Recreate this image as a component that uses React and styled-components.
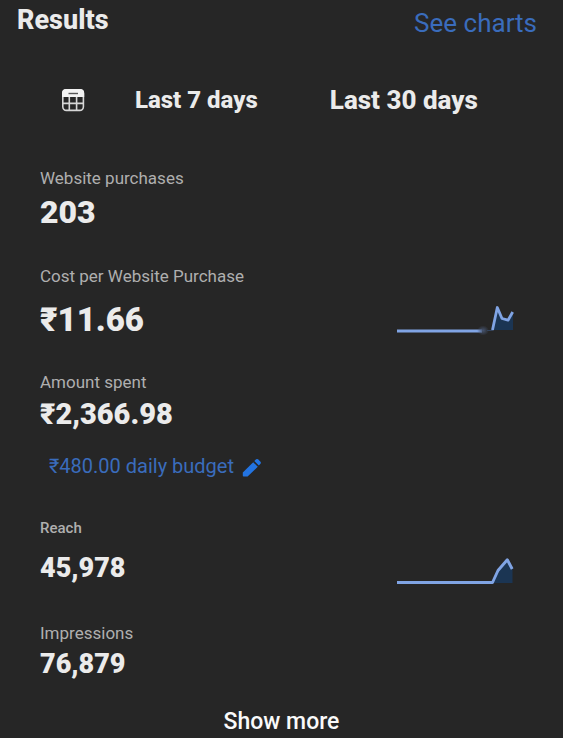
import React, { useState } from 'react';
import styled, { createGlobalStyle } from 'styled-components';

const GlobalStyle = createGlobalStyle`
  *, *::before, *::after { box-sizing: border-box; }
  body {
    margin: 0;
    background: #262626;
    color: #ebebeb;
    font-family: Roboto, "Liberation Sans", sans-serif;
  }
`;

const Panel = styled.main`
  display: flex;
  flex-direction: column;
  padding: 4px 0 2px;
`;

const Header = styled.header`
  display: flex;
  justify-content: space-between;
  align-items: flex-start;
  padding: 0 26px 0 17px;
`;

const Title = styled.h1`
  margin: 0;
  font-size: 27px;
  line-height: 32px;
  font-weight: 800;
`;

const ChartsLink = styled.a`
  margin-top: 3px;
  font-size: 26px;
  line-height: 32px;
  color: #3a6cbc;
  text-decoration: none;
`;

const Ranges = styled.nav`
  display: flex;
  align-items: center;
  margin-top: 45px;
  padding-left: 61px;
`;

const RangeButton = styled.button`
  display: flex;
  align-items: center;
  height: 32px;
  margin: 0 0 0 ${(p) => p.$gap || 0}px;
  padding: 0;
  border: 0;
  background: none;
  color: inherit;
  font: 800 ${(p) => p.$size || 24}px/30px Roboto, "Liberation Sans", sans-serif;
  cursor: pointer;
`;

const Metrics = styled.dl`
  display: flex;
  flex-direction: column;
  margin: 52px 0 0;
  padding: 0 49px 0 40px;
`;

const Metric = styled.div`
  margin-bottom: ${(p) => p.$after}px;
`;

const Label = styled.dt`
  font-size: ${(p) => (p.$small ? 15 : 17)}px;
  line-height: 20px;
  font-weight: ${(p) => (p.$small ? 500 : 400)};
  color: #afafaf;
`;

const Reading = styled.dd`
  display: flex;
  justify-content: space-between;
  align-items: center;
  margin: ${(p) => p.$gap}px 0 0;
  font-size: ${(p) => p.$size}px;
  line-height: ${(p) => p.$line}px;
  font-weight: 900;
`;

const Spark = styled.svg`
  display: block;
  width: 118px;
  height: 32px;
  flex: none;
`;

const Budget = styled.dd`
  margin: 22px 0 0 9px;
`;

const BudgetButton = styled.button`
  display: flex;
  align-items: center;
  gap: 8px;
  padding: 0;
  border: 0;
  background: none;
  color: #3a6cbc;
  font: 400 20px/24px Roboto, "Liberation Sans", sans-serif;
  cursor: pointer;

  svg { margin-top: 3px; }
`;

const MoreButton = styled.button`
  align-self: center;
  padding: 0;
  border: 0;
  background: none;
  color: #fafafa;
  font: 500 23px/28px Roboto, "Liberation Sans", sans-serif;
  cursor: pointer;
`;

function CalendarIcon() {
  return (
    <svg width="24" height="24" viewBox="0 0 24 24" aria-hidden="true">
      <rect x="1.8" y="1.8" width="20.6" height="20.6" rx="3.6" fill="none" stroke="#d6d6d6" strokeWidth="1.6" />
      <path d="M1 9V5a4 4 0 0 1 4-4h14.2a4 4 0 0 1 4 4v4z" fill="#f2f2f2" />
      <path d="M7.5 5.5h9.5" stroke="#555" strokeWidth="1.4" />
      <path d="M2 15.4h20M8.3 9v13M15.6 9v13" stroke="#d6d6d6" strokeWidth="1.6" />
    </svg>
  );
}

function PencilIcon() {
  return (
    <svg width="20" height="20" viewBox="0 0 20 20" aria-hidden="true">
      <path d="M1.6 18.6q-.8 0-.8-.8v-3.2L11.2 4.2l4.6 4.6L5.6 18.6zM12.3 3.1l1.8-1.8q1-.8 2 0l2.4 2.4q.8 1 0 2l-1.7 1.9z" fill="#2374e1" />
    </svg>
  );
}

function CostSpark() {
  return (
    <Spark viewBox="0 0 118 32" role="img" aria-label="Cost per website purchase trend">
      <defs>
        <radialGradient id="joint">
          <stop offset="0" stopColor="#46546f" />
          <stop offset="1" stopColor="#46546f" stopOpacity="0" />
        </radialGradient>
      </defs>
      <path d="M96 26L101 3L105 14L112 16L117 8V26z" fill="#1b3553" />
      <path d="M1 27H86" stroke="#80a4e4" strokeWidth="3" />
      <ellipse cx="87" cy="26.5" rx="6" ry="5" fill="url(#joint)" />
      <path d="M91 26.5h6" stroke="#34445c" strokeWidth="1" />
      <path d="M96.5 26L101.3 3.5L106 14.5L112 16.2L116.7 8" fill="none" stroke="#80a4e4" strokeWidth="2.8" strokeLinejoin="round" />
    </Spark>
  );
}

function ReachSpark() {
  return (
    <Spark viewBox="0 0 118 32" role="img" aria-label="Reach trend">
      <path d="M96 31L102 18L111 7L116.5 17V31z" fill="#1b3553" />
      <path d="M1 30.5H96.5L102 18.5L111.3 7.8L116.2 17" fill="none" stroke="#80a4e4" strokeWidth="2.9" strokeLinejoin="round" />
    </Spark>
  );
}

export default function App() {
  const [range, setRange] = useState('30');
  return (
    <>
      <GlobalStyle />
      <Panel>
        <Header>
          <Title>Results</Title>
          <ChartsLink href="#charts">See charts</ChartsLink>
        </Header>
        <Ranges aria-label="Date range">
          <RangeButton type="button" aria-label="Choose dates"><CalendarIcon /></RangeButton>
          <RangeButton type="button" $gap={50} aria-pressed={range === '7'} onClick={() => setRange('7')}>
            Last 7 days
          </RangeButton>
          <RangeButton type="button" $gap={72} $size={26} aria-pressed={range === '30'} onClick={() => setRange('30')}>
            Last 30 days
          </RangeButton>
        </Ranges>
        <Metrics>
          <Metric $after={34}>
            <Label>Website purchases</Label>
            <Reading $gap={4} $size={32} $line={40}>203</Reading>
          </Metric>
          <Metric $after={32}>
            <Label>Cost per Website Purchase</Label>
            <Reading $gap={14} $size={33} $line={40}>₹11.66<CostSpark /></Reading>
          </Metric>
          <Metric $after={40}>
            <Label>Amount spent</Label>
            <Reading $gap={4} $size={29} $line={36}>₹2,366.98</Reading>
            <Budget>
              <BudgetButton type="button">₹480.00 daily budget<PencilIcon /></BudgetButton>
            </Budget>
          </Metric>
          <Metric $after={39}>
            <Label $small>Reach</Label>
            <Reading $gap={14} $size={27} $line={32}>45,978<ReachSpark /></Reading>
          </Metric>
          <Metric $after={28}>
            <Label>Impressions</Label>
            <Reading $gap={5} $size={27} $line={32}>76,879</Reading>
          </Metric>
        </Metrics>
        <MoreButton type="button">Show more</MoreButton>
      </Panel>
    </>
  );
}
